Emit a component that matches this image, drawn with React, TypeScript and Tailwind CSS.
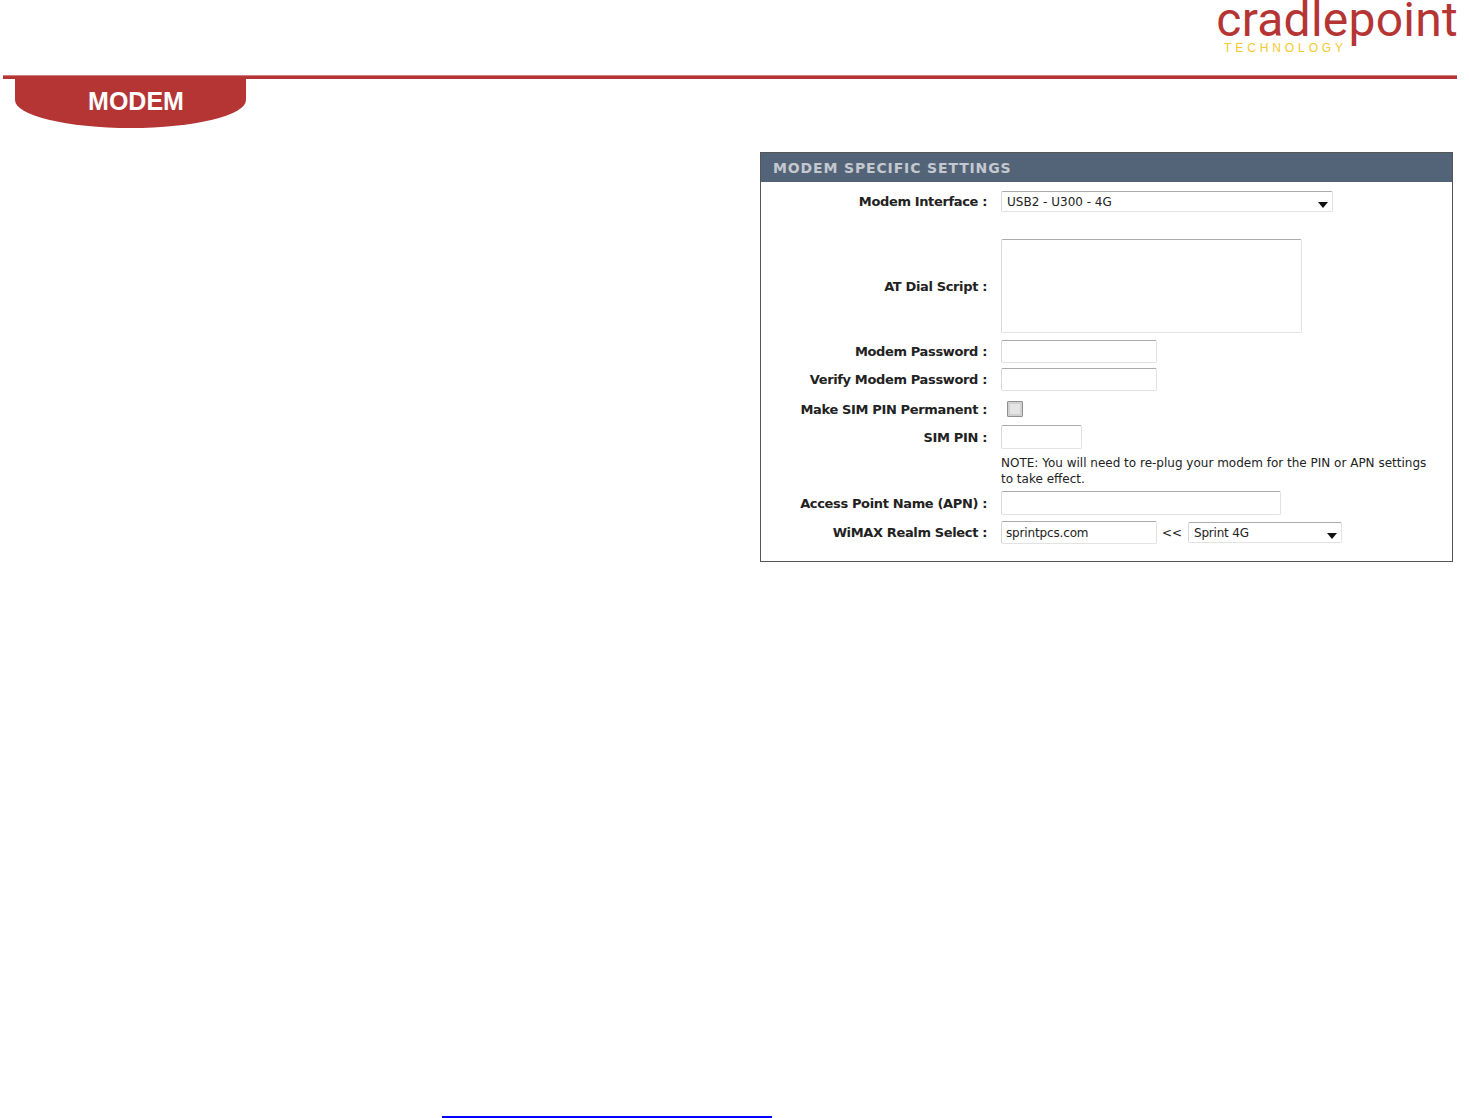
import React from 'react';

const labelFont = "font-['DejaVu_Sans',sans-serif]";
const inputClass =
  'block h-full border border-[#e2e2e2] border-t-[#ababab] border-l-[#d8d8d8] rounded-[2px] bg-white px-[5px] text-[12px] text-[#222] outline-none';

const Row = ({ label, height, children, className = '' }: { label?: string; height: string; children: React.ReactNode; className?: string }) => (
  <div className={`flex items-center ${height} ${className}`}>
    <div className={`w-[226px] shrink-0 pt-[1px] text-right text-[13px] font-bold text-[#222] tracking-[-0.36px] ${labelFont}`}>
      {label && `${label} :`}
    </div>
    <div className="ml-[14px] flex h-full items-center">{children}</div>
  </div>
);

const Arrow = () => (
  <svg className="absolute right-[5px] top-[11px]" width="10" height="6" viewBox="0 0 10 6">
    <path d="M0 0h10L5 6z" fill="#111" />
  </svg>
);

const FakeSelect = ({ value, width, height, text }: { value: string; width: string; height: string; text: string }) => (
  <div className={`relative ${width} ${height}`}>
    <select defaultValue={value} className={`${inputClass} w-full appearance-none pt-[1px] ${text} ${labelFont}`}>
      <option>{value}</option>
    </select>
    <Arrow />
  </div>
);

export default function App() {
  return (
    <div className="relative h-[1118px] w-[1469px] overflow-hidden bg-white">
      {/* header */}
      <header className="flex h-[75px] justify-end">
        <div className="relative mr-[11px] h-[75px] w-[240px]">
          <div className="absolute right-0 top-[1px] font-['Roboto',sans-serif] text-[48px] font-normal leading-[38px] tracking-[0.25px] text-[#b53535]">
            cradlepoint
          </div>
          <div className="absolute left-[6px] top-[41px] font-['Liberation_Sans',sans-serif] text-[12px] leading-[14px] tracking-[3.9px] text-[#f5c82e]">
            TECHNOLOGY
          </div>
        </div>
      </header>
      <div className="ml-[3px] h-[4px] w-[1454px] border-t border-t-[#cf7f7f] bg-[#b53535]" />
      <div className="ml-[15px] flex h-[49px] w-[231px] items-center justify-center rounded-b-[115px_28px] bg-[#b53535] pb-[4px] pl-[11px] font-['Liberation_Sans',sans-serif] text-[25px] font-bold text-white">
        MODEM
      </div>

      {/* panel */}
      <section className="ml-[760px] mt-[24px] h-[410px] w-[693px] border border-[#555]">
        <h2 className={`flex h-[29px] items-center bg-[#546478] pl-[12px] pt-[2px] text-[14px] font-bold tracking-[0.86px] text-[#c4c9cf] ${labelFont}`}>
          MODEM SPECIFIC SETTINGS
        </h2>
        <div className="flex flex-col pt-[9px]">
          <Row label="Modem Interface" height="h-[21px]">
            <FakeSelect value="USB2 - U300 - 4G" width="w-[332px]" height="h-[21px]" text="text-[12px]" />
          </Row>
          <Row label="AT Dial Script" height="h-[94px] mt-[27px]">
            <textarea className={`${inputClass} w-[301px] resize-none`} />
          </Row>
          <Row label="Modem Password" height="h-[23px] mt-[7px]">
            <input className={`${inputClass} w-[156px]`} />
          </Row>
          <Row label="Verify Modem Password" height="h-[23px] mt-[5px]">
            <input className={`${inputClass} w-[156px]`} />
          </Row>
          <Row label="Make SIM PIN Permanent" height="h-[16px] mt-[10px]">
            <div className="ml-[6px] h-[16px] w-[16px] rounded-[1px] border border-[#8f8f8f] bg-[#e4e4e4] shadow-[inset_0_0_0_2px_#d0d0d0]" />
          </Row>
          <Row label="SIM PIN" height="h-[24px] mt-[8px]">
            <input className={`${inputClass} w-[81px]`} />
          </Row>
          <div className={`ml-[240px] mt-[6px] w-[440px] text-[12px] leading-[16px] text-[#222] ${labelFont}`}>
            NOTE: You will need to re-plug your modem for the PIN or APN settings to take effect.
          </div>
          <Row label="Access Point Name (APN)" height="h-[24px] mt-[4px]">
            <input className={`${inputClass} w-[280px]`} />
          </Row>
          <Row label="WiMAX Realm Select" height="h-[23px] mt-[6px]">
            <input defaultValue="sprintpcs.com" className={`${inputClass} w-[156px] tracking-[-0.15px] !pl-[4px] ${labelFont}`} />
            <span className={`ml-[5px] w-[26px] text-[12px] text-[#222] ${labelFont}`}>&lt;&lt;</span>
            <FakeSelect value="Sprint 4G" width="w-[154px]" height="h-[21px]" text="text-[12px] tracking-[-0.2px]" />
          </Row>
        </div>
      </section>

      {/* link underline at the page cut */}
      <div className="ml-[442px] mt-[554px] h-[2px] w-[330px] bg-[#0000ff]" />
    </div>
  );
}
